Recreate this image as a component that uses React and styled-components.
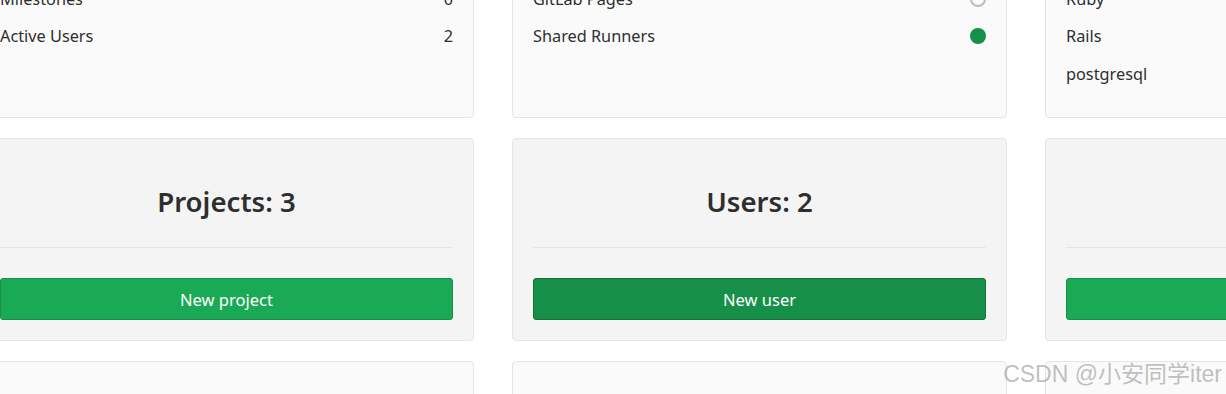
import React from 'react';
import styled, { createGlobalStyle } from 'styled-components';

const GlobalStyle = createGlobalStyle`
  html, body {
    margin: 0;
    padding: 0;
    overflow: hidden;
    background: #fff;
  }
  body {
    font-family: "Noto Sans", "Liberation Sans", sans-serif;
    color: #2e2e2e;
  }
`;

const Page = styled.div`
  position: relative;
  width: 1226px;
  height: 394px;
  overflow: hidden;
`;

const Grid = styled.div`
  display: grid;
  grid-template-columns: repeat(3, 495px);
  column-gap: 38px;
  row-gap: 20px;
  margin-left: -21px;
  margin-top: -112px;
`;

const InfoCard = styled.div`
  background: #fafafa;
  border: 1px solid #e5e5e5;
  border-radius: 4px;
  padding: 16px 20px 24px;
`;

const Row = styled.div`
  display: flex;
  justify-content: space-between;
  align-items: center;
  height: 37.5px;
  font-size: 16.3px;
`;

const Dot = styled.span`
  width: 16px;
  height: 16px;
  border-radius: 50%;
  box-sizing: border-box;
  background: ${(p) => (p.$on ? '#168f48' : 'transparent')};
  border: ${(p) => (p.$on ? 'none' : '2px solid #bbb')};
`;

const StatCard = styled.div`
  background: #f4f4f4;
  border: 1px solid #e5e5e5;
  border-radius: 4px;
  padding: 20px;
  text-align: center;
`;

const StatTitle = styled.h3`
  margin: 25px 0 29px;
  font-size: 27.6px;
  line-height: 34px;
  font-weight: 600;
  color: #2e2e2e;
`;

const Divider = styled.hr`
  border: 0;
  border-top: 1px solid #e5e5e5;
  margin: 0 0 30px;
`;

const GreenButton = styled.button`
  display: block;
  width: 100%;
  height: 42px;
  padding: 1px 0 0;
  border-radius: 3px;
  border: 1px solid ${(p) => (p.$hover ? '#12753a' : '#168f48')};
  background: ${(p) => (p.$hover ? '#168f48' : '#1aaa55')};
  color: #fff;
  font-family: "Noto Sans", "Liberation Sans", sans-serif;
  font-size: 16.5px;
  line-height: 40px;
`;

const EmptyCard = styled.div`
  background: #fafafa;
  border: 1px solid #e5e5e5;
  border-radius: 4px;
  height: 120px;
`;

const Watermark = styled.div`
  position: absolute;
  right: 4px;
  bottom: 8px;
  font-family: "Liberation Sans", "Noto Sans CJK SC", sans-serif;
  font-size: 23px;
  line-height: 23px;
  color: rgba(140, 140, 140, 0.55);
`;

const stats = [
  ['Snippets', '0'],
  ['SSH Keys', '1'],
  ['Milestones', '0'],
  ['Active Users', '2'],
];

const features = [
  ['Reply by email', false],
  ['Container Registry', true],
  ['GitLab Pages', false],
  ['Shared Runners', true],
];

const components = ['GitLab API', 'GitLab Shell', 'Ruby', 'Rails', 'postgresql'];

export default function App() {
  return (
    <Page>
      <GlobalStyle />
      <Grid>
        <InfoCard>
          {stats.map(([label, val]) => (
            <Row key={label}>
              <span>{label}</span>
              <span>{val}</span>
            </Row>
          ))}
        </InfoCard>
        <InfoCard>
          {features.map(([label, on]) => (
            <Row key={label}>
              <span>{label}</span>
              <Dot $on={on} />
            </Row>
          ))}
        </InfoCard>
        <InfoCard>
          {components.map((label) => (
            <Row key={label}>
              <span>{label}</span>
            </Row>
          ))}
        </InfoCard>

        <StatCard>
          <StatTitle>Projects: 3</StatTitle>
          <Divider />
          <GreenButton>New project</GreenButton>
        </StatCard>
        <StatCard>
          <StatTitle>Users: 2</StatTitle>
          <Divider />
          <GreenButton $hover>New user</GreenButton>
        </StatCard>
        <StatCard>
          <StatTitle>Groups: 1</StatTitle>
          <Divider />
          <GreenButton>New group</GreenButton>
        </StatCard>

        <EmptyCard />
        <EmptyCard />
        <EmptyCard />
      </Grid>
      <Watermark>CSDN @小安同学iter</Watermark>
    </Page>
  );
}
